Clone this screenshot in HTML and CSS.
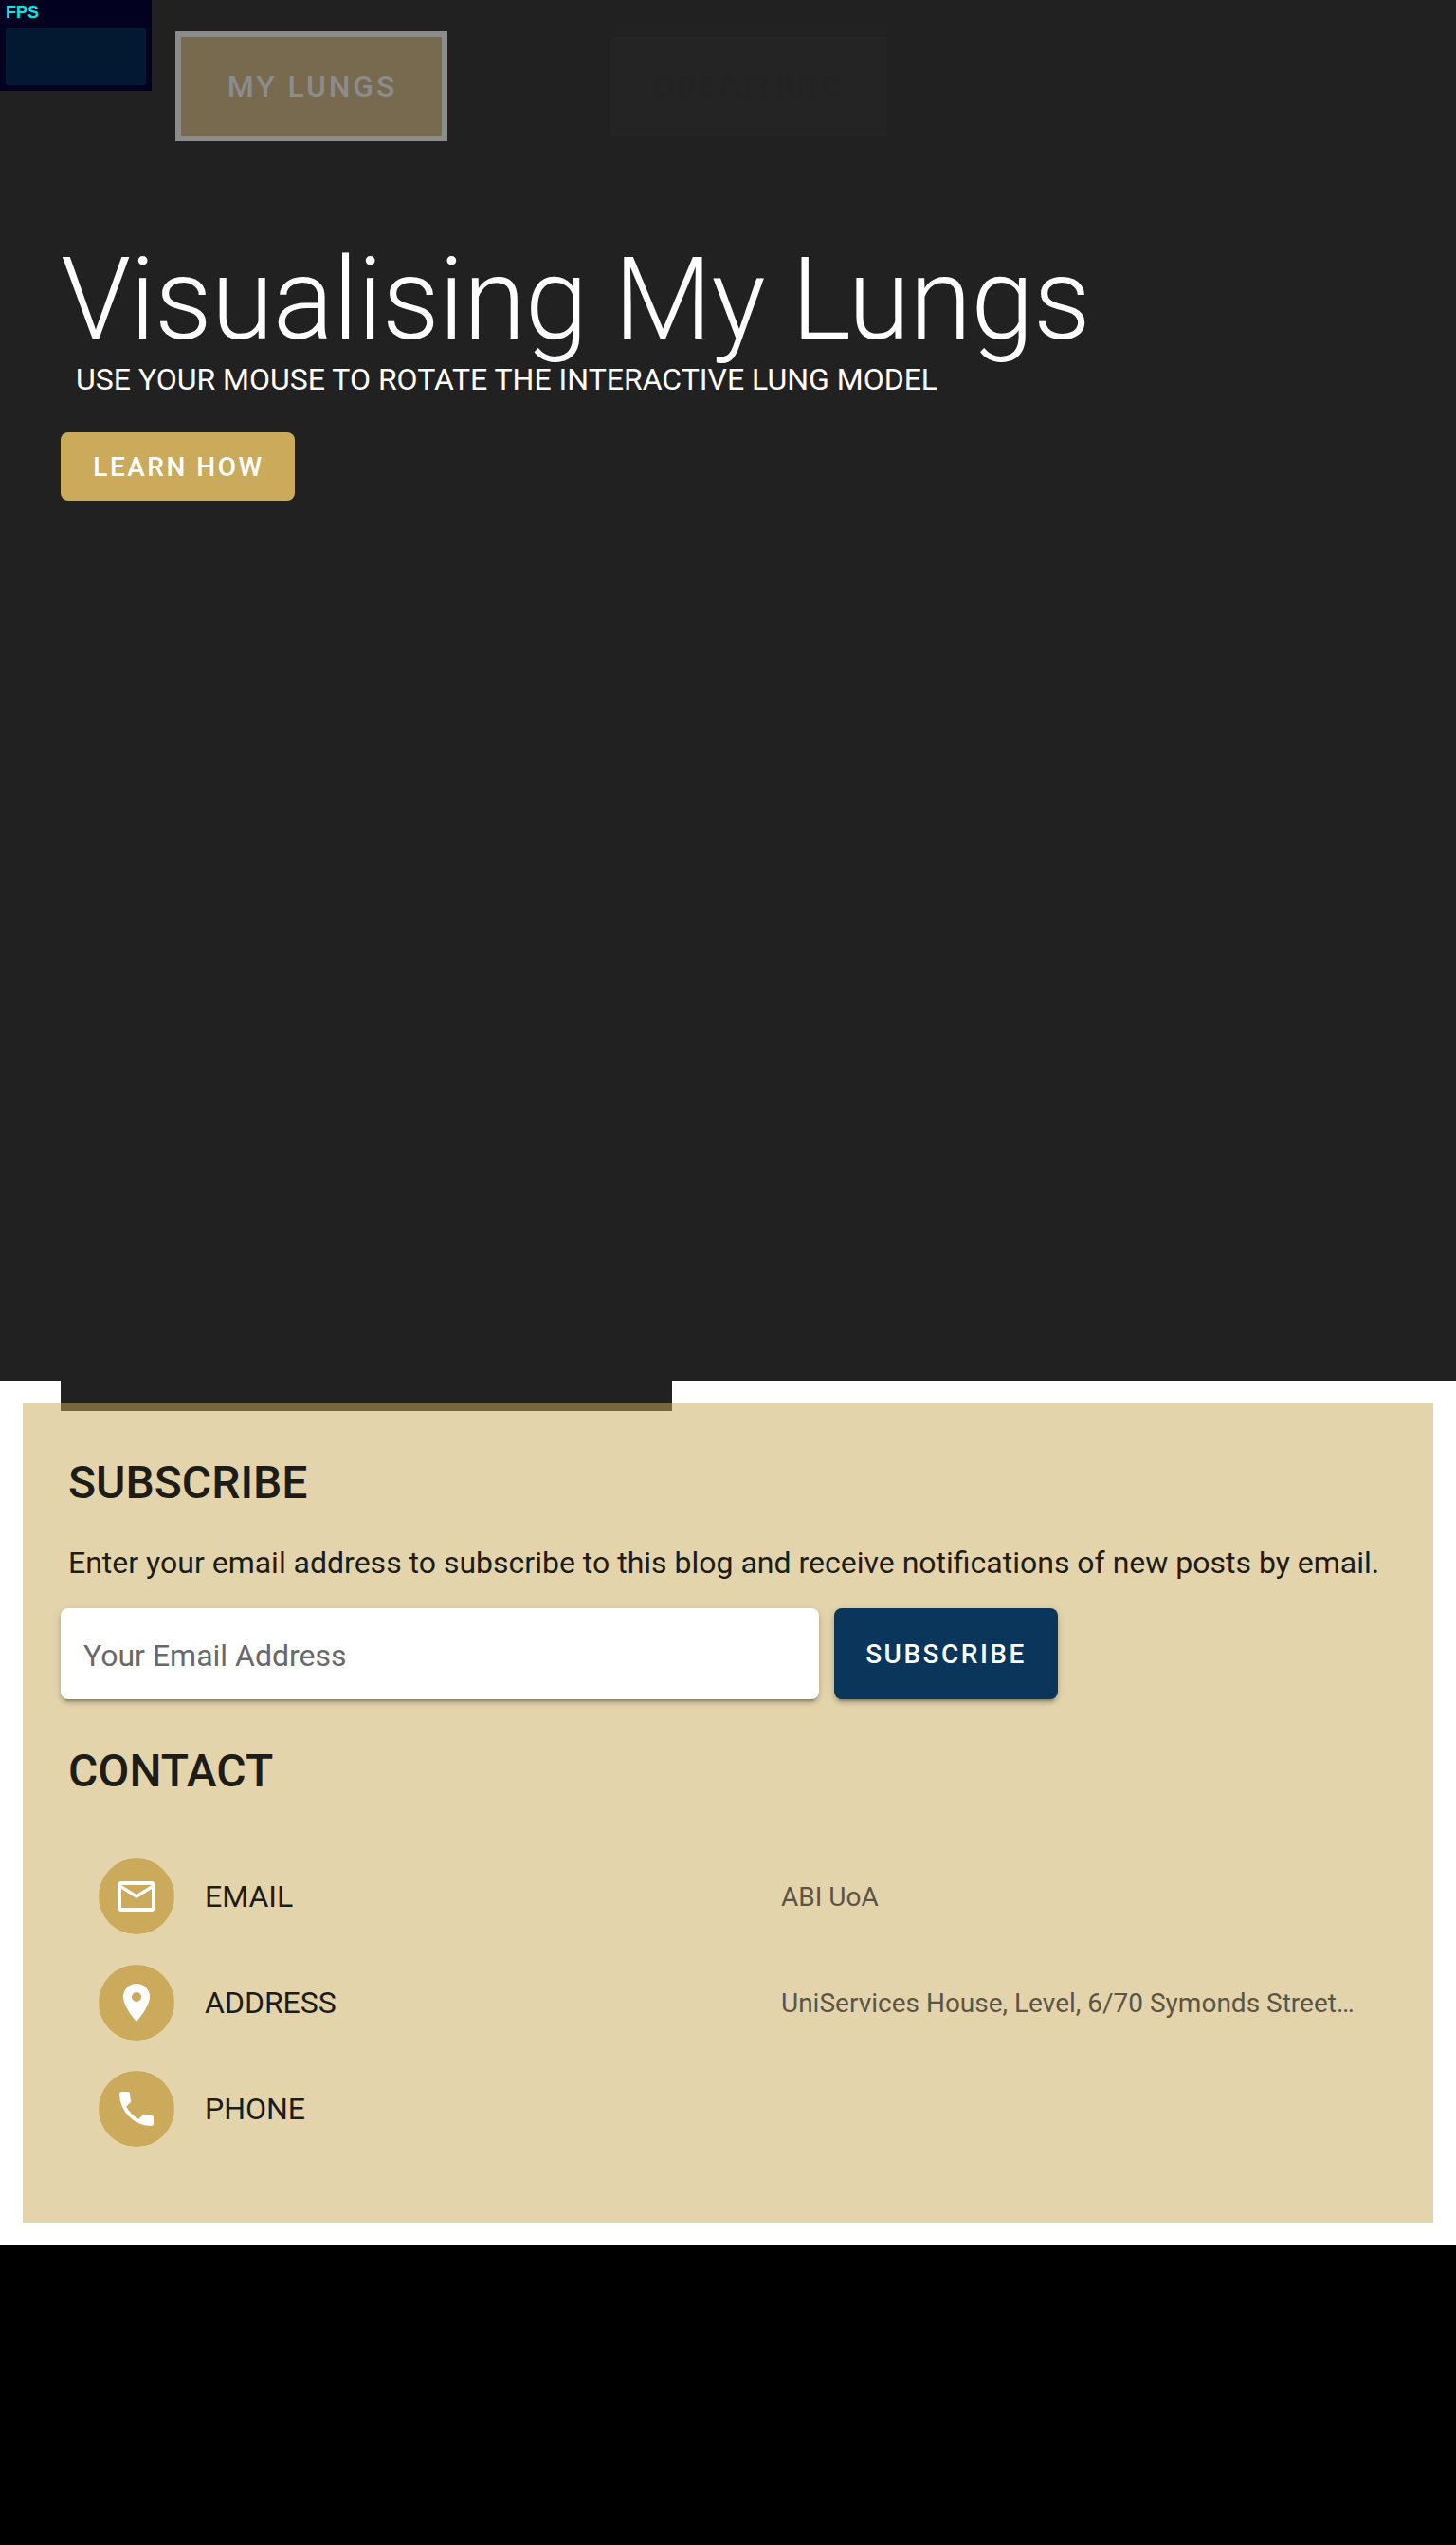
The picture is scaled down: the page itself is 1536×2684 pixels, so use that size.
FILE: index.html
```html
<!DOCTYPE html>
<html lang="en">
<head>
<meta charset="utf-8">
<title>Visualising My Lungs</title>
<link rel="stylesheet" href="styles.css">
</head>
<body>
<div class="fps"><span class="fps-label">FPS</span><div class="fps-graph"></div></div>
<section class="hero">
  <nav class="nav">
    <a class="tab tab-active">MY LUNGS</a>
    <a class="tab tab-faded">BREATHING</a>
  </nav>
  <h1 class="title">Visualising My Lungs</h1>
  <p class="subtitle">USE YOUR MOUSE TO ROTATE THE INTERACTIVE LUNG MODEL</p>
  <button class="btn learn">LEARN HOW</button>
  <div class="canvas-edge"></div>
</section>
<footer class="footer">
  <div class="card">
    <h2 class="heading">SUBSCRIBE</h2>
    <p class="intro">Enter your email address to subscribe to this blog and receive notifications of new posts by email.</p>
    <form class="form">
      <input class="field" type="email" placeholder="Your Email Address">
      <button class="btn subscribe" type="button">SUBSCRIBE</button>
    </form>
    <h2 class="heading contact-heading">CONTACT</h2>
    <ul class="contacts">
      <li class="contact">
        <span class="avatar"><svg viewBox="0 0 24 24"><path d="M22 6C22 4.9 21.1 4 20 4H4C2.9 4 2 4.9 2 6V18C2 19.1 2.9 20 4 20H20C21.1 20 22 19.1 22 18V6M20 6L12 11L4 6H20M20 18H4V8L12 13L20 8V18Z"/></svg></span>
        <span class="label">EMAIL</span><span class="value">ABI UoA</span>
      </li>
      <li class="contact">
        <span class="avatar"><svg viewBox="0 0 24 24"><path d="M12 11.5A2.5 2.5 0 0 1 9.500 9A2.500 2.500 0 0 1 12 6.500A2.500 2.500 0 0 1 14.500 9A2.500 2.500 0 0 1 12 11.500M12 2A7 7 0 0 0 5 9C5 14.250 12 22 12 22C12 22 19 14.250 19 9A7 7 0 0 0 12 2Z"/></svg></span>
        <span class="label">ADDRESS</span><span class="value">UniServices House, Level, 6/70 Symonds Street…</span>
      </li>
      <li class="contact">
        <span class="avatar"><svg viewBox="0 0 24 24"><path d="M6.620 10.790C8.060 13.620 10.380 15.940 13.210 17.380L15.410 15.180C15.690 14.900 16.080 14.820 16.430 14.930C17.550 15.300 18.750 15.500 20 15.500A1 1 0 0 1 21 16.500V20A1 1 0 0 1 20 21A17 17 0 0 1 3 4A1 1 0 0 1 4 3H7.500A1 1 0 0 1 8.500 4C8.500 5.250 8.700 6.450 9.070 7.570C9.180 7.920 9.100 8.310 8.820 8.590L6.620 10.790Z"/></svg></span>
        <span class="label">PHONE</span>
      </li>
    </ul>
  </div>
</footer>
</body>
</html>
```
FILE: styles.css
```css
* { box-sizing: border-box; margin: 0; padding: 0; }
body { background: #000; font-family: Roboto, sans-serif; font-size: 32px; line-height: 48px; }

.fps { position: absolute; left: 0; top: 0; z-index: 2; width: 160px; height: 96px; padding: 4px 6px 6px; background: #020120; }
.fps-label { display: block; height: 26px; padding-left: 0; font: bold 18px/18px "Liberation Sans", sans-serif; color: #00e8e8; }
.fps-graph { height: 60px; background: #021931; }

.hero { position: relative; height: 1456px; padding: 33px 64px 0; background: #212121; color: #fff; }
.nav { display: flex; align-items: center; gap: 172px; height: 116px; margin: 0 0 107px 121px; }
.tab { display: flex; align-items: center; justify-content: center; font-weight: 500; letter-spacing: 2.857px; }
.tab-active { width: 287px; height: 116px; padding-left: 2px; border: 6px solid #8c8c8c; background: #786a4e; color: #8c8c8c; }
.tab-faded { width: 292px; height: 104px; padding-left: 2px; background: #242424; color: #232323; }
.title { font-size: 120px; font-weight: 300; line-height: 120px; letter-spacing: -1px; white-space: nowrap; }
.subtitle { padding-left: 16px; }
.canvas-edge { position: absolute; left: 64px; top: 1456px; width: 645px; height: 32px; background: #212121; }

.btn { display: block; border: 0; border-radius: 8px; font: 500 28px/40px Roboto, sans-serif; letter-spacing: 2.5px; color: #fff; }
.learn { width: 247px; height: 72px; margin-top: 32px; padding: 2px 0 0 2px; background: #cbaa5c; }

.footer { height: 912px; padding: 24px; background: #fff; }
.card { position: relative; height: 864px; padding: 52px 40px 0; background: rgba(203, 170, 92, .51); color: #1d1c16; }
.heading { padding-left: 8px; font-size: 48px; font-weight: 500; line-height: 64px; }
.intro { margin-top: 28px; padding-left: 8px; white-space: nowrap; }
.form { display: flex; gap: 16px; margin-top: 24px; }
.field, .subscribe { height: 96px; box-shadow: 0 6px 2px -4px rgba(0,0,0,.2), 0 4px 4px rgba(0,0,0,.14), 0 2px 10px rgba(0,0,0,.12); }
.field { width: 800px; padding: 3px 24px 0; border: 0; border-radius: 8px; background: #fff; font: 400 32px/40px Roboto, sans-serif; }
.field::placeholder { color: #696969; }
.subscribe { width: 236px; padding-top: 2px; background: #09365a; }
.contact-heading { margin-top: 44px; }
.contacts { margin-top: 44px; padding: 0 40px; list-style: none; }
.contact { display: grid; grid-template-columns: 80px 576px 1fr; column-gap: 32px; align-items: center; height: 112px; }
.avatar { display: flex; align-items: center; justify-content: center; width: 80px; height: 80px; border-radius: 50%; background: #cbaa5c; }
.avatar svg { width: 48px; height: 48px; fill: #fff; }
.value { padding-top: 2px; font-size: 28px; color: #5c5545; white-space: nowrap; }
```
